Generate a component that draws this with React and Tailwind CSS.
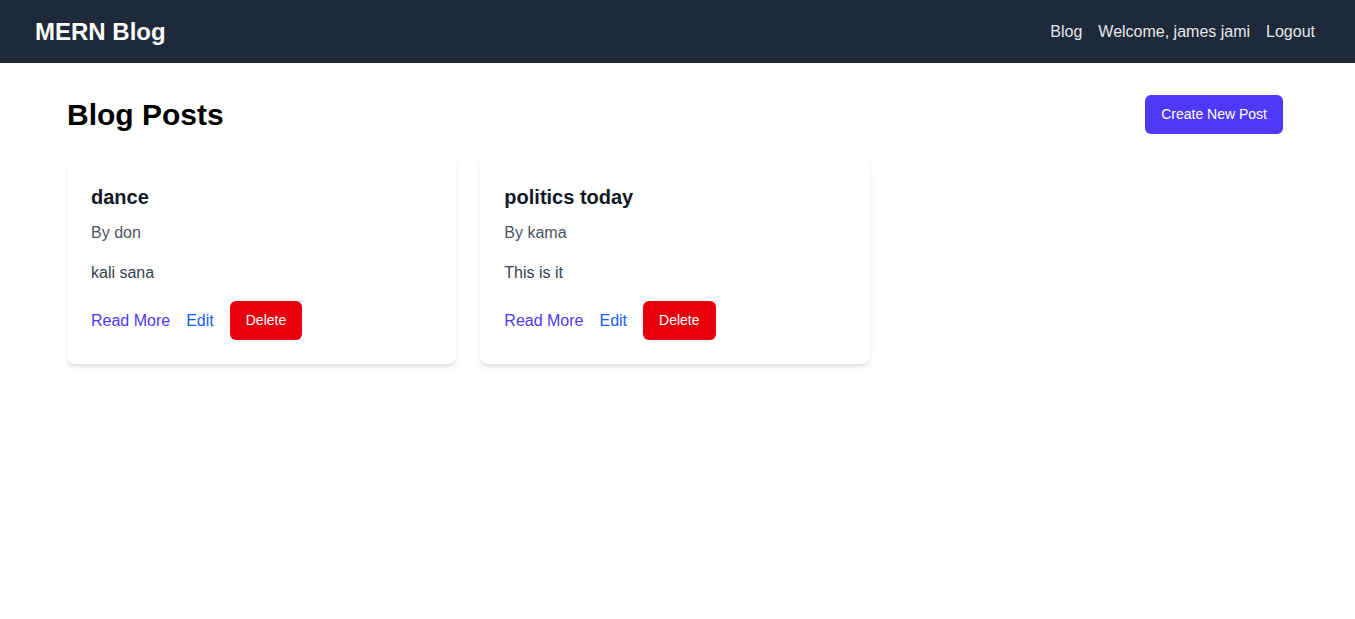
import React from "react";

const posts = [
  { id: 1, title: "dance", author: "don", body: "kali sana" },
  { id: 2, title: "politics today", author: "kama", body: "This is it" },
];

const PostCard = ({ post }) => {
  return (
    <div className="bg-white rounded-lg shadow-md p-6">
      <h2 className="text-xl font-semibold text-gray-900 mb-[10px] mt-px">{post.title}</h2>
      <p className="text-gray-600 mb-4">By {post.author}</p>
      <p className="text-gray-700 mb-4">{post.body}</p>
      <div className="flex items-center gap-4">
        <a href="#" className="text-indigo-600">Read More</a>
        <a href="#" className="text-blue-600">Edit</a>
        <button className="bg-red-600 text-white text-sm px-4 py-2.5 rounded-md leading-[19px]">Delete</button>
      </div>
    </div>
  );
};

const App = () => {
  return (
    <div className="min-h-screen bg-white" style={{ fontFamily: '"Liberation Sans", Arial, sans-serif' }}>
      <nav className="bg-gray-800 h-[63px] pl-[35px] pr-10 flex items-center justify-between">
        <a href="#" className="text-white text-2xl font-bold">MERN Blog</a>
        <div className="flex items-center gap-4 text-gray-200">
          <a href="#">Blog</a>
          <span>Welcome, james jami</span>
          <a href="#">Logout</a>
        </div>
      </nav>

      <main className="pl-[67px] pr-[72px] pt-8">
        <div className="flex items-center justify-between mb-6">
          <h1 className="text-3xl font-bold text-black">Blog Posts</h1>
          <button className="bg-indigo-600 text-white text-sm px-4 py-2.5 rounded-md leading-[19px]">Create New Post</button>
        </div>
        <div className="grid grid-cols-3 gap-6">
          {posts.map((p) => (
            <PostCard key={p.id} post={p} />
          ))}
        </div>
      </main>
    </div>
  );
};

export default App;
